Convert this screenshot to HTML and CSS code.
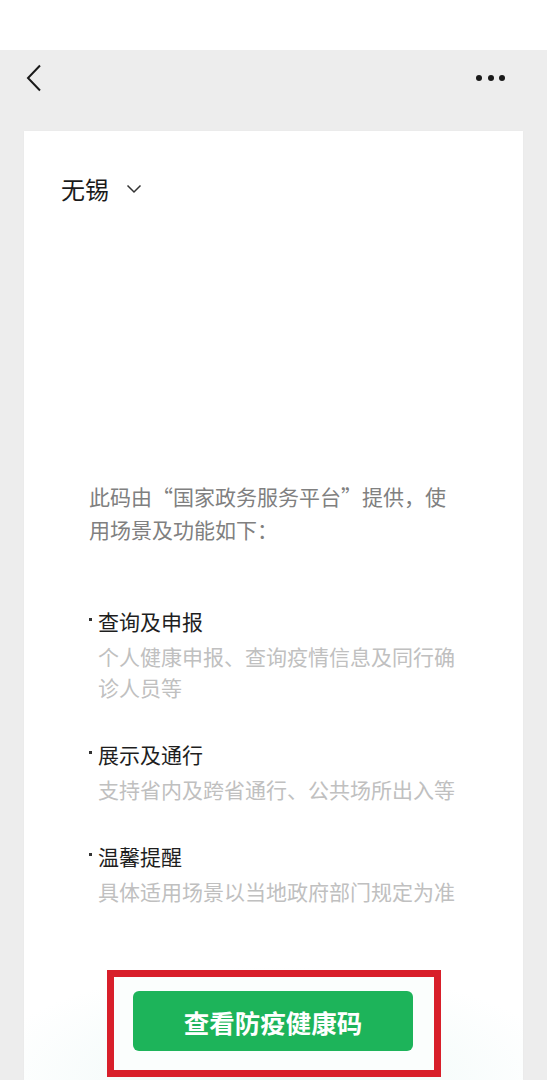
FILE: index.html
```html
<!DOCTYPE html>
<html lang="zh-CN">
<head>
<meta charset="utf-8">
<title>无锡</title>
<link rel="stylesheet" href="styles.css">
</head>
<body>
<div class="status"></div>
<header class="nav">
  <svg class="back" width="16" height="28" viewBox="0 0 16 28"><polyline points="14,1.5 2,14 14,26.5" fill="none" stroke="#1a1a1a" stroke-width="2" stroke-linejoin="miter"/></svg>
  <div class="more"><span></span><span></span><span></span></div>
</header>
<main class="card">
  <div class="city">无锡<svg class="chev" width="16" height="10" viewBox="0 0 16 10"><polyline points="1.5,1.5 8,8 14.5,1.5" fill="none" stroke="#333" stroke-width="1.5"/></svg></div>
  <section class="info">
    <p class="intro">此码由“国家政务服务平台”提供，使用场景及功能如下：</p>
    <ul class="items">
      <li><div class="head">查询及申报</div><div class="sub">个人健康申报、查询疫情信息及同行确诊人员等</div></li>
      <li><div class="head">展示及通行</div><div class="sub">支持省内及跨省通行、公共场所出入等</div></li>
      <li><div class="head">温馨提醒</div><div class="sub">具体适用场景以当地政府部门规定为准</div></li>
    </ul>
  </section>
  <div class="cta-wrap"><button class="cta">查看防疫健康码</button></div>
</main>
</body>
</html>
```
FILE: styles.css
```css
* { box-sizing: border-box; }
html, body { margin: 0; padding: 0; }
body {
  background: #ededed;
  font-family: "Noto Sans CJK SC", "Noto Sans", sans-serif;
  width: 547px;
  height: 1080px;
  overflow: hidden;
}
.status { height: 50px; background: #ffffff; }
.nav {
  height: 56px;
  display: flex;
  align-items: center;
  justify-content: space-between;
  padding: 0 42px 0 26px;
}
.back { display: block; }
.more { display: flex; gap: 5.5px; }
.more span { width: 6px; height: 6px; border-radius: 50%; background: #1a1a1a; display: block; }
.card {
  margin: 25px 24px 0 24px;
  background: #ffffff;
  background-image: radial-gradient(ellipse 60% 12% at 50% 100%, rgba(214, 240, 236, 0.45), rgba(255,255,255,0));
  padding: 40.5px 61px 3px 37px;
  display: flex;
  flex-direction: column;
  box-shadow: 0 0 2px rgba(0,0,0,0.03);
}
.city {
  font-size: 24px;
  line-height: 34px;
  color: #1a1a1a;
  display: flex;
  align-items: center;
}
.chev { margin-left: 17px; margin-top: 0; }
.info { padding-left: 28px; margin-top: 274px; }
.intro {
  margin: 0;
  font-size: 21px;
  line-height: 33px;
  color: #808080;
}
.items {
  list-style: none;
  margin: 59.5px 0 0 0;
  padding: 0;
  display: flex;
  flex-direction: column;
  gap: 35px;
}
.head {
  display: flex;
  align-items: flex-start;
  font-size: 21px;
  line-height: 32px;
  color: #1e1e1e;
}
.head::before {
  content: "";
  width: 3px;
  height: 3px;
  background: #333;
  margin: 13px 6px 0 0;
  flex: none;
}
.sub {
  margin-top: 4px;
  padding-left: 9px;
  font-size: 21px;
  line-height: 31px;
  color: #c0c0c0;
}
.cta-wrap {
  margin: 63px 0 0 46px;
  width: 334px;
  border: 7px solid #d81f2a;
  padding: 14px 21px 19px 19px;
  background: #fbfefd;
}
.cta {
  display: block;
  width: 280px;
  height: 60px;
  border: none;
  border-radius: 6px;
  background: #1db45a;
  color: #ffffff;
  font-family: "Noto Sans CJK SC", "Noto Sans", sans-serif;
  font-weight: 700;
  font-size: 25.5px;
  padding: 0;
}
```
